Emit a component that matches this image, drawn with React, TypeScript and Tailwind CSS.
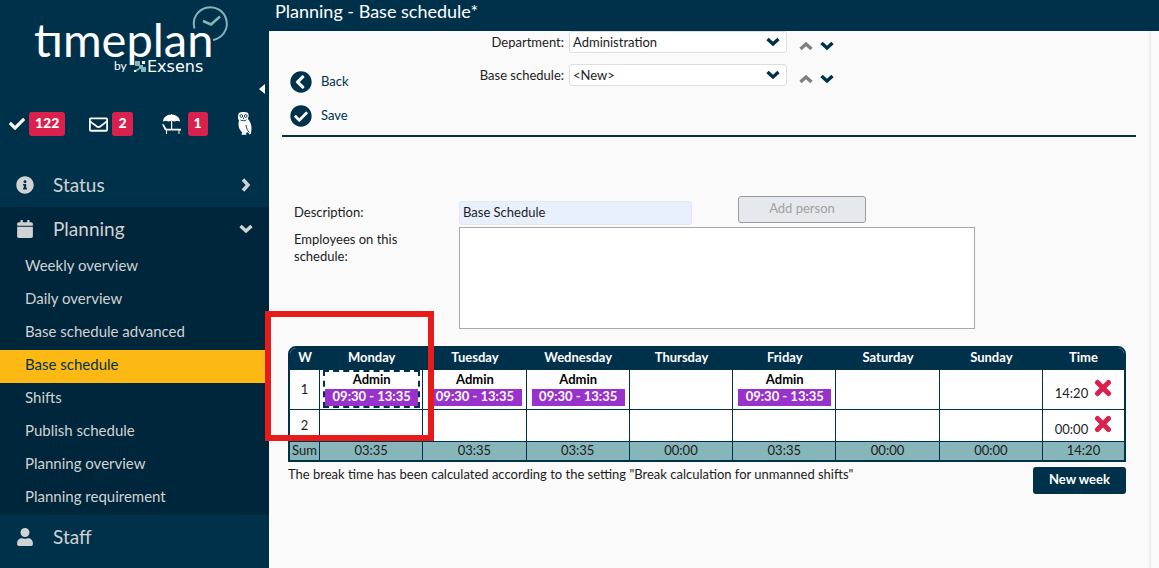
import { useState, type ReactNode } from "react";
import {
  FaCalendar,
  FaCheck,
  FaCheckCircle,
  FaChevronCircleLeft,
  FaInfoCircle,
  FaRegEnvelope,
  FaUser,
} from "react-icons/fa";

const PLANNING_ITEMS = [
  "Weekly overview",
  "Daily overview",
  "Base schedule advanced",
  "Base schedule",
  "Shifts",
  "Publish schedule",
  "Planning overview",
  "Planning requirement",
];

const DAYS = ["Monday", "Tuesday", "Wednesday", "Thursday", "Friday", "Saturday", "Sunday"];

interface Week {
  id: number;
  shifts: Record<string, string>;
  total: string;
}

const WEEKS: Week[] = [
  {
    id: 1,
    shifts: {
      Monday: "09:30 - 13:35",
      Tuesday: "09:30 - 13:35",
      Wednesday: "09:30 - 13:35",
      Friday: "09:30 - 13:35",
    },
    total: "14:20",
  },
  { id: 2, shifts: {}, total: "00:00" },
];

const SUMS = ["03:35", "03:35", "03:35", "00:00", "03:35", "00:00", "00:00"];

function Logo() {
  return (
    <svg viewBox="0 0 200 72" className="h-[72px] w-[200px]" role="img" aria-label="timeplan by Exsens">
      <g fill="none" stroke="#86b5ba" strokeWidth="2">
        <path d="M161.500 24.500A16.500 16.500 0 1 1 180 36" />
        <path d="M170 17l8 3.500 9-8" strokeWidth="2.500" />
      </g>
      <text x="1" y="53" fontSize="47" fill="#fff">
        tımeplan
      </text>
      <text x="81" y="66" fontSize="12" fill="#fff">
        by
      </text>
      <g fill="#86b5ba">
        <rect x="102" y="57" width="5" height="5" />
        <rect x="106" y="61" width="4" height="4" />
        <rect x="108" y="63" width="5" height="5" />
        <path d="M101 67l5-3 1 1-4 3z" />
      </g>
      <path d="M109 57h3v3h-3zM101 66h2v2h-2z" fill="#fff" />
      <text x="114" y="68" fontSize="16" fill="#fff" fontFamily="DejaVu Sans, sans-serif">
        Exsens
      </text>
    </svg>
  );
}

function Chevron({ direction = "down" }: { direction?: "up" | "down" | "right" }) {
  const turn = { up: "rotate-180", down: "", right: "-rotate-90" }[direction];
  return (
    <svg viewBox="0 0 14 10" className={`h-[10px] w-[14px] ${turn}`} fill="none" aria-hidden="true">
      <path d="M1.500 2l5.500 5 5.500-5" stroke="currentColor" strokeWidth="3.400" />
    </svg>
  );
}

function Cross() {
  return (
    <svg viewBox="0 0 18 18" className="h-[18px] w-[18px]" fill="none" aria-hidden="true">
      <path d="M3.500 3.500l11 11M14.500 3.500l-11 11" stroke="currentColor" strokeWidth="5" strokeLinecap="round" />
    </svg>
  );
}

function BeachIcon() {
  return (
    <svg viewBox="0 0 20 20" className="h-5 w-5" fill="currentColor" aria-hidden="true">
      <path d="M1 7.500C1.500 3 5 1 9 .6V0h1v.6c4 .4 7.500 2.400 8 6.900l-2.800-.8-2.700.8-3-.8-3 .8-2.700-.8z" />
      <path d="M9 7h1.200v9H9z" />
      <path d="M0 10.200h1.600L4.500 14.800H19v1.800h-1.500V20h-1v-3.400H5V20H4v-3.400l-1-.4z" />
    </svg>
  );
}

function OwlIcon() {
  return (
    <svg viewBox="0 0 15 24" className="h-6 w-[15px]" aria-hidden="true">
      <path
        d="M2 1c2-1.200 7-1.200 9 0 1 2 .8 4-.2 5.800 2.600 2.700 3.700 6.200 3.700 9.700l-.5 5-1.300 1-1.900-2.200-1.800.5.500 2H4.500l.6-2.600C1.800 17.500.800 13.500 2 8.500.500 6.500.500 3.500 2 1z"
        fill="#fff"
      />
      <g fill="none" stroke="#00314b" strokeWidth=".9">
        <circle cx="4.300" cy="4" r="1.400" />
        <circle cx="8.700" cy="4" r="1.400" />
        <path d="M6.500 5.500v1.700M3.500 8c2 1 4.500 1 6-.2M9 13c.2 3 1.500 5.500 3.300 7.500" />
      </g>
    </svg>
  );
}

function Counter({ icon, count, label, className }: { icon: ReactNode; count: number; label: string; className: string }) {
  return (
    <button type="button" aria-label={label} className={`flex items-center ${className}`}>
      {icon}
      <span className="rounded-[3px] bg-[#d9214e] px-[6px] pb-[2px] text-sm leading-[22px] font-black">{count}</span>
    </button>
  );
}

function MenuHeader({ icon, label, chevron }: { icon: ReactNode; label: string; chevron?: ReactNode }) {
  return (
    <button type="button" className="flex h-11 w-full items-center px-4 text-[19px]">
      <span className="w-[37px]">{icon}</span>
      <span className="flex-1 pb-[2px] text-left">{label}</span>
      {chevron}
    </button>
  );
}

function Sidebar() {
  return (
    <aside className="w-[269px] shrink-0 bg-[#00314b] text-[#d0d2d3]">
      <div className="flex h-[112px] items-start justify-between pt-1 pr-1 pl-[33px] text-white">
        <Logo />
        <button type="button" aria-label="Collapse menu" className="mt-20">
          <svg viewBox="0 0 6 10" className="h-[10px] w-[6px]" fill="currentColor">
            <path d="M6 0v10L0 5z" />
          </svg>
        </button>
      </div>
      <div className="flex h-6 items-center pl-[9px] text-white">
        <Counter icon={<FaCheck size={16} />} count={122} label="Approvals" className="gap-1" />
        <Counter icon={<FaRegEnvelope size={19} />} count={2} label="Messages" className="ml-6 gap-1" />
        <Counter icon={<BeachIcon />} count={1} label="Holidays" className="mx-[29px] gap-[6px]" />
        <OwlIcon />
      </div>
      <nav className="mt-[27px]">
        <MenuHeader icon={<FaInfoCircle size={18} />} label="Status" chevron={<Chevron direction="right" />} />
        <div className="bg-[#00263b]">
          <MenuHeader icon={<FaCalendar size={18} />} label="Planning" chevron={<Chevron />} />
          <ul>
            {PLANNING_ITEMS.map((item) => (
              <li key={item}>
                <a
                  href="#"
                  className={`block h-[33px] pl-[25px] text-[15px] leading-7 ${
                    item === "Base schedule" ? "bg-[#fdb913] text-[#00314b]" : ""
                  }`}
                >
                  {item}
                </a>
              </li>
            ))}
          </ul>
        </div>
        <MenuHeader icon={<FaUser size={18} />} label="Staff" />
      </nav>
    </aside>
  );
}

function Picker({ id, label, options }: { id: string; label: string; options: string[] }) {
  return (
    <div className="flex h-[22px] items-center">
      <label htmlFor={id} className="w-[102px] text-right">
        {label}
      </label>
      <div className="relative ml-[5px] w-[218px]">
        <select id={id} className="block h-[22px] w-full appearance-none rounded-[3px] border border-[#dedede] bg-white pl-[3px]">
          {options.map((o) => (
            <option key={o}>{o}</option>
          ))}
        </select>
        <span className="pointer-events-none absolute top-[6px] right-[7px] text-[#00314b]">
          <Chevron />
        </span>
      </div>
      <div className="mt-2 ml-3 flex gap-[7px]">
        <button type="button" aria-label={`Previous ${id}`} className="text-[#808080]">
          <Chevron direction="up" />
        </button>
        <button type="button" aria-label={`Next ${id}`} className="text-[#00314b]">
          <Chevron />
        </button>
      </div>
    </div>
  );
}

function ScheduleTable() {
  return (
    <div className="relative">
      <div className="overflow-hidden rounded-t-lg border-2 border-[#00314b] bg-white">
        <table className="w-full table-fixed border-separate border-spacing-0 text-center">
          <thead className="bg-[#00314b] text-white">
            <tr className="h-[22px]">
              <th className="w-[30px] px-0 pt-0 pb-1 font-bold">W</th>
              {DAYS.map((day) => (
                <th key={day} className="px-0 pt-0 pb-1 font-bold">
                  {day}
                </th>
              ))}
              <th className="w-[81px] px-0 pt-0 pb-1 font-bold">Time</th>
            </tr>
          </thead>
          <tbody>
            {WEEKS.map((week) => (
              <tr key={week.id} className={week.id === 1 ? "h-10" : "h-8"}>
                <td className="border-r border-b border-[#00314b] p-0">{week.id}</td>
                {DAYS.map((day) => (
                  <td key={day} className="border-r border-b border-[#00314b] p-0 align-top">
                    {week.shifts[day] && (
                      <div
                        className={`mr-[2px] ml-[3px] h-[38px] border-2 border-dashed font-bold ${
                          week.id === 1 && day === "Monday" ? "border-[#00314b]" : "border-transparent"
                        }`}
                      >
                        <div className="pb-[2px] leading-[15px] text-black">Admin</div>
                        <div className="bg-[#9932cc] pb-[2px] leading-[15px] text-white">{week.shifts[day]}</div>
                      </div>
                    )}
                  </td>
                ))}
                <td className="border-b border-[#00314b] p-0">
                  <div className="flex items-center justify-center gap-[6px]">
                    <span className="pt-2">{week.total}</span>
                    <button type="button" aria-label={`Delete week ${week.id}`} className="pb-1 text-[#d9214e]">
                      <Cross />
                    </button>
                  </div>
                </td>
              </tr>
            ))}
          </tbody>
          <tfoot className="bg-[#86b5ba] leading-4">
            <tr>
              <td className="border-r border-[#00314b] px-0 pt-0 pb-[2px]">Sum</td>
              {SUMS.map((sum, i) => (
                <td key={DAYS[i]} className="border-r border-[#00314b] px-0 pt-0 pb-[2px]">
                  {sum}
                </td>
              ))}
              <td className="px-0 pt-0 pb-[2px]">14:20</td>
            </tr>
          </tfoot>
        </table>
      </div>
      {/* highlight frame around the selected day */}
      <div className="pointer-events-none absolute -top-[35px] -left-[23px] h-[130px] w-[169px] border-6 border-[#e81b1b]" />
    </div>
  );
}

export default function App() {
  const [description, setDescription] = useState("Base Schedule");

  return (
    <div className="flex h-screen overflow-hidden bg-[#fafafa] font-['Lato',sans-serif] text-[13px] leading-[17px] text-[#1c1c1c]">
      <Sidebar />
      <div className="relative flex min-w-0 flex-1 flex-col">
        <header className="h-[31px] bg-[#00314b] pl-[6px] text-white">
          <h1 className="text-lg leading-[22px]">Planning - Base schedule*</h1>
        </header>
        <main className="mr-2 flex-1 border-r-2 border-[#eeeeee]">
          <div className="mr-[13px] ml-[13px] flex h-[106px] border-b-2 border-[#00314b]">
            <div className="w-[180px] pt-[34px] pl-2 text-[#00314b]">
              <button type="button" className="flex h-[34px] items-center gap-[9px]">
                <FaChevronCircleLeft size={22} />
                <span className="pb-[2px]">Back</span>
              </button>
              <button type="button" className="flex h-[34px] items-center gap-[9px]">
                <FaCheckCircle size={22} />
                <span className="pb-[2px]">Save</span>
              </button>
            </div>
            <div className="flex flex-col gap-[11px]">
              <Picker id="department" label="Department:" options={["Administration"]} />
              <Picker id="schedule" label="Base schedule:" options={["<New>"]} />
            </div>
          </div>

          <form className="mt-[59px] ml-[25px] grid grid-cols-[165px_1fr] gap-y-[2px]">
            <label htmlFor="description" className="self-end pb-[2px] leading-[22px]">
              Description:
            </label>
            <div className="flex h-[29px] gap-[46px]">
              <input
                id="description"
                value={description}
                onChange={(e) => setDescription(e.target.value)}
                className="h-6 w-[233px] self-end rounded-[3px] border border-[#e3e8ee] bg-[#e8effd] px-[3px] pb-[2px]"
              />
              <button
                type="button"
                disabled
                className="h-[27px] w-32 rounded-[3px] border border-[#9a9da0] bg-[#e5e8ec] pb-[2px] text-[#a0a2a4]"
              >
                Add person
              </button>
            </div>
            <label htmlFor="employees" className="w-[120px] pt-1">
              Employees on this schedule:
            </label>
            <textarea
              id="employees"
              className="block h-[102px] w-full max-w-[516px] resize-none border border-[#a9a9ad] bg-white p-1"
            />
          </form>

          <section className="mt-[17px] mr-[23px] ml-[19px]">
            <ScheduleTable />
            <div className="mt-1 flex items-start justify-between">
              <p>The break time has been calculated according to the setting "Break calculation for unmanned shifts"</p>
              <button type="button" className="mt-px h-[27px] w-[93px] rounded-[3px] bg-[#00314b] pb-[2px] font-bold text-white">
                New week
              </button>
            </div>
          </section>
        </main>
      </div>
    </div>
  );
}
